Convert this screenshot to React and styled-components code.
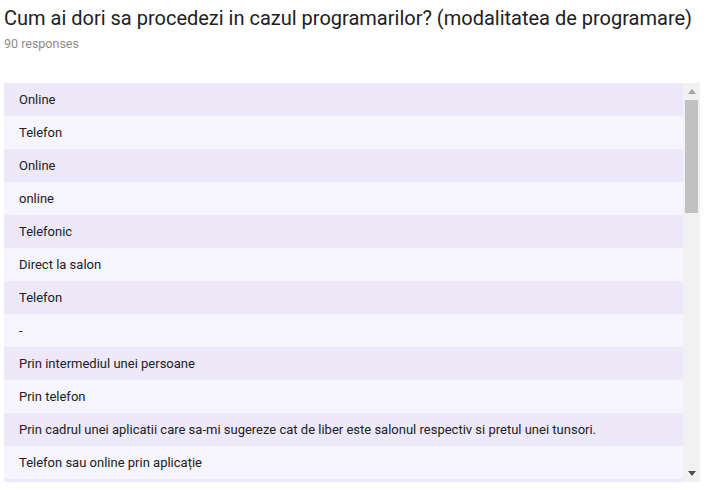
import React from 'react'
import styled, { createGlobalStyle } from 'styled-components'

const Global = createGlobalStyle`
    body {
        margin: 0;
        background: #fff;
        font-family: Roboto, "Liberation Sans", sans-serif;
    }
`

const Page = styled.div`
    padding: 6px 4px 0 4px;
    width: 696px;
`

const Title = styled.h1`
    margin: 0;
    font-size: 20px;
    font-weight: 400;
    line-height: 24px;
    color: #202124;
`

const Count = styled.div`
    margin-top: 6px;
    font-size: 12.5px;
    line-height: 16px;
    color: #8c8c8c;
`

const ListBox = styled.div`
    display: flex;
    margin-top: 31px;
    height: 399px;
    overflow: hidden;
`

const Rows = styled.ul`
    flex: 1;
    margin: 0;
    padding: 0;
    list-style: none;
`

const Row = styled.li`
    height: 33px;
    display: flex;
    align-items: center;
    padding-left: 15px;
    font-size: 13px;
    color: #202124;
    background: ${p => (p.odd ? '#f6f4fc' : '#ede9f9')};
`

const Track = styled.div`
    width: 17px;
    background: #f1f1f1;
    display: flex;
    flex-direction: column;
    align-items: center;
`

const Arrow = styled.div`
    height: 17px;
    width: 17px;
    display: flex;
    align-items: center;
    justify-content: center;
    color: ${p => (p.dark ? '#505050' : '#a3a3a3')};
    margin-top: ${p => (p.down ? 'auto' : '0')};
`

const Thumb = styled.div`
    width: 13px;
    height: 113px;
    background: #c1c1c1;
`

const answers = [
    'Online',
    'Telefon',
    'Online',
    'online',
    'Telefonic',
    'Direct la salon',
    'Telefon',
    '-',
    'Prin intermediul unei persoane',
    'Prin telefon',
    'Prin cadrul unei aplicatii care sa-mi sugereze cat de liber este salonul respectiv si pretul unei tunsori.',
    'Telefon sau online prin aplicație',
    '',
]

const Triangle = ({ up }) => (
    <svg width="8" height="5" viewBox="0 0 8 5">
        <path d={up ? 'M0 5 L4 0 L8 5 Z' : 'M0 0 L8 0 L4 5 Z'} fill="currentColor" />
    </svg>
)

const App = () => {
    const items = answers.map((a, i) => (
        <Row key={i} odd={i % 2 === 1}>
            {a}
        </Row>
    ))

    return (
        <Page>
            <Global />
            <Title>Cum ai dori sa procedezi in cazul programarilor? (modalitatea de programare)</Title>
            <Count>90 responses</Count>
            <ListBox>
                <Rows>{items}</Rows>
                <Track>
                    <Arrow>
                        <Triangle up />
                    </Arrow>
                    <Thumb />
                    <Arrow down dark>
                        <Triangle />
                    </Arrow>
                </Track>
            </ListBox>
        </Page>
    )
}

export default App
